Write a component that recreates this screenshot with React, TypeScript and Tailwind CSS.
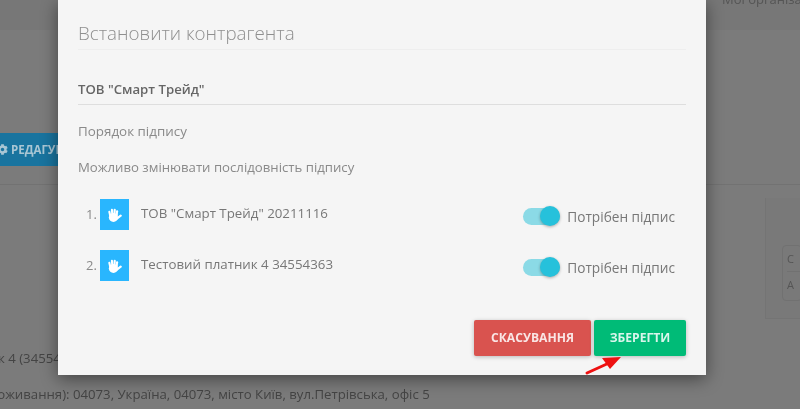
import React from "react";
import { FaCog } from "react-icons/fa";

function HandIcon() {
  return (
    <svg width="15" height="15" viewBox="0 0 14 14" className="mt-[1px]" fill="#ffffff" stroke="#ffffff" strokeLinecap="round">
      <ellipse cx="6" cy="8.8" rx="4.3" ry="4.2" stroke="none" />
      <g strokeWidth="2">
        <path d="M3 7 L2.2 3.6" />
        <path d="M5 6 L4.6 1.8" />
        <path d="M7 6 L7.2 1.6" />
        <path d="M9 7 L9.4 3" />
        <path d="M9.2 10 L12.8 7.2" />
      </g>
    </svg>
  );
}

function SignerRow({ n, name }: { n: number; name: string }) {
  return (
    <div className="flex items-center h-[31px] mb-[20px]">
      <span className="w-[22px] pl-[8px] text-[13px] leading-none text-[#8a8a8a] whitespace-nowrap">{n}.</span>
      <div className="w-[29px] h-[31px] bg-[#29b6fe] flex items-center justify-center">
        <HandIcon />
      </div>
      <span className="ml-[12px] mb-[1px] text-[13.3px] text-[#777] whitespace-nowrap">{name}</span>
      <div className="ml-auto flex items-center mt-[5px]">
        <div className="relative w-[37px] h-[17px] rounded-full bg-[#8bdae6]">
          <div className="absolute right-0 top-[-2px] w-[20px] h-[20px] rounded-full bg-[#26c1db] shadow-[0_1px_3px_rgba(0,0,0,0.3)]" />
        </div>
        <span className="ml-[7px] mr-[11px] text-[13.65px] text-[#777] whitespace-nowrap">Потрібен підпис</span>
      </div>
    </div>
  );
}

export default function App() {
  return (
    <div className="relative w-[800px] h-[409px] overflow-hidden bg-[#7b7b7b] font-['Open_Sans',sans-serif] blur-[0.5px]">
      {/* page behind the dialog */}
      <div className="h-[30px] bg-[#777] flex justify-end overflow-hidden">
        <span className="mt-[-10px] mr-[-8px] w-[86px] text-[13px] text-[#555] whitespace-nowrap overflow-hidden">Мої організації</span>
      </div>
      <div className="h-[155px] border-b border-[#727272] pt-[103px]">
        <div className="w-[60px] h-[33px] bg-[#19749f] flex items-center overflow-hidden text-[#a9c6d4] text-[11.5px] font-bold whitespace-nowrap">
          <FaCog className="w-[11px] h-[11px] ml-[-3px] mr-[3px] shrink-0" />
          РЕДАГУВАТИ
        </div>
      </div>
      <div className="flex justify-end pt-[13px] h-[164px]">
        <div className="w-[35px] h-[121px] bg-[#797979] border-l border-[#747474] border-b pl-[16px] pt-[47px]">
          <div className="w-[20px] h-[56px] border border-[#717171] rounded-sm text-[11px] text-[#555] pl-[4px] overflow-hidden">
            <div className="h-[26px] border-b border-[#717171] leading-[26px]">С</div>
            <div className="leading-[26px]">А</div>
          </div>
        </div>
      </div>
      <div className="text-[13.2px] text-[#444] whitespace-nowrap ml-[-2px] leading-[19px]">к 4 (34554</div>
      <div className="text-[13.2px] text-[#444] whitespace-nowrap mt-[17px] ml-[-19px] leading-[19px]">
        проживання): 04073, Україна, 04073, місто Київ, вул.Петрівська, офіс 5
      </div>

      {/* dialog */}
      <div className="absolute left-[58px] top-0 w-[648px] h-[375px] bg-[#f5f5f5] shadow-[0_4px_16px_rgba(0,0,0,0.45)] px-[20px]">
        <div className="h-[50px] pt-[19px] border-b border-[#eeeeee] text-[18.8px] font-light leading-[29px] text-[#8f8f8f] whitespace-nowrap">
          Встановити контрагента
        </div>
        <div className="mt-[25px] h-[30px] border-b border-[#dedede] text-[13.2px] font-semibold text-[#666] leading-[28px]">
          ТОВ "Смарт Трейд"
        </div>
        <div className="mt-[16px] text-[13.4px] leading-[20px] text-[#8a8a8a]">Порядок підпису</div>
        <div className="mt-[16px] text-[13.2px] leading-[20px] text-[#8a8a8a]">Можливо змінювати послідовність підпису</div>
        <div className="mt-[22px]">
          <SignerRow n={1} name={'ТОВ "Смарт Трейд" 20211116'} />
          <SignerRow n={2} name="Тестовий платник 4 34554363" />
        </div>
        <div className="flex justify-end gap-[3px] mt-[39px]">
          <button className="w-[117px] h-[36px] rounded-[2px] bg-[#d9534f] text-white/85 text-[12.1px] font-bold shadow-[0_1px_4px_rgba(0,0,0,0.25)]">СКАСУВАННЯ</button>
          <button className="w-[92px] h-[36px] rounded-[2px] bg-[#00bb77] text-white/85 text-[12.1px] font-bold shadow-[0_1px_4px_rgba(0,0,0,0.25)]">ЗБЕРЕГТИ</button>
        </div>
        <svg className="absolute left-[527px] top-[356px]" width="38" height="20" viewBox="0 0 38 20">
          <path d="M2 17 L24 7" stroke="#ee1111" strokeWidth="3" strokeLinecap="round" />
          <path d="M36 1 L17 2 L25 13 Z" fill="#ee1111" />
        </svg>
      </div>
    </div>
  );
}
